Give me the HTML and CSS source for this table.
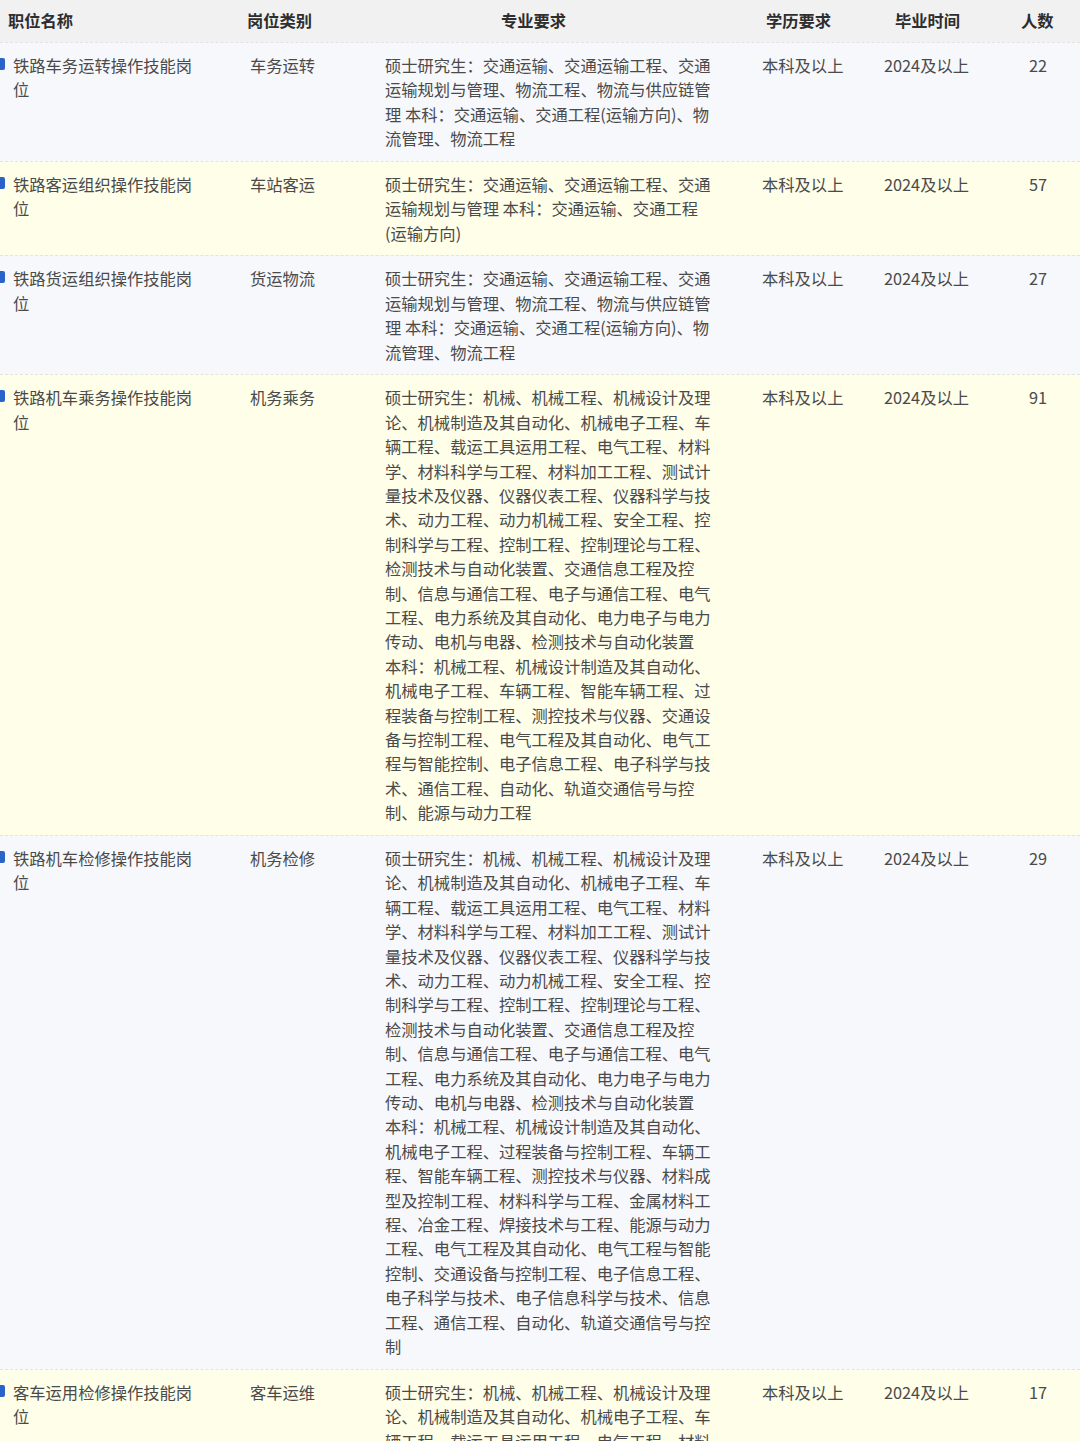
FILE: index.html
```html
<!DOCTYPE html>
<html lang="zh-CN">
<head>
<meta charset="utf-8">
<title>岗位列表</title>
<link rel="stylesheet" href="styles.css">
</head>
<body>
<div class="table">
  <div class="head">
    <div class="h h1">职位名称</div>
    <div class="h h2">岗位类别</div>
    <div class="h h3">专业要求</div>
    <div class="h h4">学历要求</div>
    <div class="h h5">毕业时间</div>
    <div class="h h6">人数</div>
  </div>

  <div class="row odd">
    <div class="c c1"><span class="name">铁路车务运转操作技能岗位</span></div>
    <div class="c c2">车务运转</div>
    <div class="c c3">硕士研究生：交通运输、交通运输工程、交通运输规划与管理、物流工程、物流与供应链管理 本科：交通运输、交通工程(运输方向)、物流管理、物流工程</div>
    <div class="c c4">本科及以上</div>
    <div class="c c5">2024及以上</div>
    <div class="c c6">22</div>
  </div>

  <div class="row even">
    <div class="c c1"><span class="name">铁路客运组织操作技能岗位</span></div>
    <div class="c c2">车站客运</div>
    <div class="c c3">硕士研究生：交通运输、交通运输工程、交通运输规划与管理 本科：交通运输、交通工程(运输方向)</div>
    <div class="c c4">本科及以上</div>
    <div class="c c5">2024及以上</div>
    <div class="c c6">57</div>
  </div>

  <div class="row odd">
    <div class="c c1"><span class="name">铁路货运组织操作技能岗位</span></div>
    <div class="c c2">货运物流</div>
    <div class="c c3">硕士研究生：交通运输、交通运输工程、交通运输规划与管理、物流工程、物流与供应链管理 本科：交通运输、交通工程(运输方向)、物流管理、物流工程</div>
    <div class="c c4">本科及以上</div>
    <div class="c c5">2024及以上</div>
    <div class="c c6">27</div>
  </div>

  <div class="row even">
    <div class="c c1"><span class="name">铁路机车乘务操作技能岗位</span></div>
    <div class="c c2">机务乘务</div>
    <div class="c c3">硕士研究生：机械、机械工程、机械设计及理论、机械制造及其自动化、机械电子工程、车辆工程、载运工具运用工程、电气工程、材料学、材料科学与工程、材料加工工程、测试计量技术及仪器、仪器仪表工程、仪器科学与技术、动力工程、动力机械工程、安全工程、控制科学与工程、控制工程、控制理论与工程、检测技术与自动化装置、交通信息工程及控制、信息与通信工程、电子与通信工程、电气工程、电力系统及其自动化、电力电子与电力传动、电机与电器、检测技术与自动化装置 本科：机械工程、机械设计制造及其自动化、机械电子工程、车辆工程、智能车辆工程、过程装备与控制工程、测控技术与仪器、交通设备与控制工程、电气工程及其自动化、电气工程与智能控制、电子信息工程、电子科学与技术、通信工程、自动化、轨道交通信号与控制、能源与动力工程</div>
    <div class="c c4">本科及以上</div>
    <div class="c c5">2024及以上</div>
    <div class="c c6">91</div>
  </div>

  <div class="row odd">
    <div class="c c1"><span class="name">铁路机车检修操作技能岗位</span></div>
    <div class="c c2">机务检修</div>
    <div class="c c3">硕士研究生：机械、机械工程、机械设计及理论、机械制造及其自动化、机械电子工程、车辆工程、载运工具运用工程、电气工程、材料学、材料科学与工程、材料加工工程、测试计量技术及仪器、仪器仪表工程、仪器科学与技术、动力工程、动力机械工程、安全工程、控制科学与工程、控制工程、控制理论与工程、检测技术与自动化装置、交通信息工程及控制、信息与通信工程、电子与通信工程、电气工程、电力系统及其自动化、电力电子与电力传动、电机与电器、检测技术与自动化装置 本科：机械工程、机械设计制造及其自动化、机械电子工程、过程装备与控制工程、车辆工程、智能车辆工程、测控技术与仪器、材料成型及控制工程、材料科学与工程、金属材料工程、冶金工程、焊接技术与工程、能源与动力工程、电气工程及其自动化、电气工程与智能控制、交通设备与控制工程、电子信息工程、电子科学与技术、电子信息科学与技术、信息工程、通信工程、自动化、轨道交通信号与控制</div>
    <div class="c c4">本科及以上</div>
    <div class="c c5">2024及以上</div>
    <div class="c c6">29</div>
  </div>

  <div class="row even">
    <div class="c c1"><span class="name">客车运用检修操作技能岗位</span></div>
    <div class="c c2">客车运维</div>
    <div class="c c3">硕士研究生：机械、机械工程、机械设计及理论、机械制造及其自动化、机械电子工程、车辆工程、载运工具运用工程、电气工程、材料学、材料科学与工程、材料加工工程、测试计量技术及仪器、仪器仪表工程、仪器科学与技术、动力工程、动力机械工程、安全工程、控制科学与工程、控制工程、控制理论与工程、检测技术与自动化装置、交通信息工程及控制、信息与通信工程、电子与通信工程、电气工程、电力系统及其自动化、电力电子与电力传动、电机与电器、检测技术与自动化装置 本科：机械工程、机械设计制造及其自动化、机械电子工程、车辆工程、智能车辆工程、过程装备与控制工程、测控技术与仪器、交通设备与控制工程、电气工程及其自动化、电气工程与智能控制、电子信息工程、电子科学与技术、通信工程、自动化、轨道交通信号与控制</div>
    <div class="c c4">本科及以上</div>
    <div class="c c5">2024及以上</div>
    <div class="c c6">17</div>
  </div>
</div>
</body>
</html>
```

FILE: styles.css
```css
html, body {
  margin: 0;
  padding: 0;
  background: #f7f8fc;
}

body {
  font-family: "Noto Sans CJK SC", "Noto Sans", sans-serif;
  font-size: 16.3px;
  line-height: 24.4px;
  color: #4a4a4a;
  width: 1080px;
  overflow: hidden;
}

.table {
  width: 1080px;
}

.head,
.row {
  display: grid;
  grid-template-columns: 235px 135px 370px 125px 125px 90px;
}

.head {
  background: #f1f1f2;
  height: 42px;
  box-sizing: border-box;
}

.h {
  font-weight: bold;
  color: #2e2e2e;
  padding-top: 8px;
  white-space: nowrap;
}

.h1 { padding-left: 8px; }
.h2 { padding-left: 12px; }
.h3 { padding-left: 131px; }
.h4 { padding-left: 26px; }
.h5 { padding-left: 30px; }
.h6 { padding-left: 31px; }

.row {
  border-top: 1px dashed #e3e3e3;
}

.row.odd { background: #f7f8fc; }
.row.even { background: #fefee9; }

.c {
  padding-top: 10px;
  padding-bottom: 10.3px;
}

.c1 {
  display: flex;
  align-items: flex-start;
  padding-right: 36px;
}

.c1::before {
  content: "";
  flex: none;
  width: 5px;
  height: 12px;
  margin-top: 5px;
  margin-right: 8px;
  background: #2a64c9;
  border-radius: 0 2px 2px 0;
}

.name {
  min-width: 0;
}

.c2 { padding-left: 15px; }
.c3 { padding-left: 15px; padding-right: 27px; }
.c4 { padding-left: 22px; }
.c5 { padding-left: 19px; }
.c6 { padding-left: 39px; }
```
